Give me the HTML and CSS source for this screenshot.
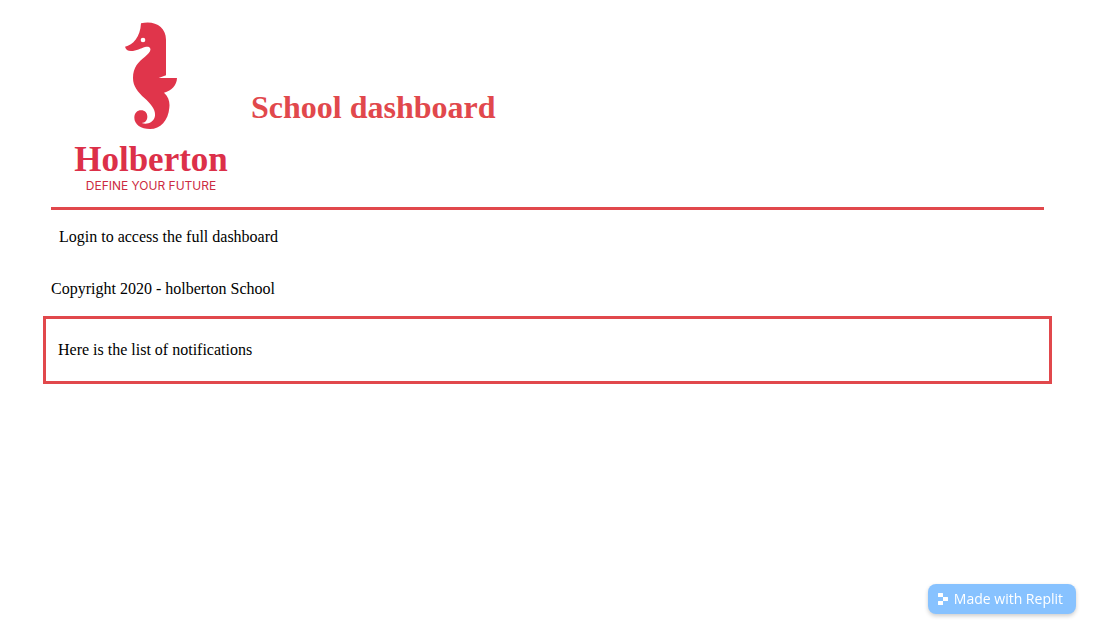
FILE: index.html
```html
<!DOCTYPE html>
<html lang="en">
<head>
  <meta charset="utf-8">
  <meta name="viewport" content="width=device-width, initial-scale=1">
  <title>School dashboard</title>
  <link rel="stylesheet" href="styles.css">
</head>
<body>
  <div class="app">
    <header class="header">
      <div class="logo">
        <svg class="logo-mark" viewBox="0 0 156 324" aria-hidden="true">
          <path fill="#e0354b" d="M48 4 C88-6 123 14 123 53 L123 160 L101 168 L156 168 C155 190 141 206 117 212 C131 225 135 240 133 257 C130 295 106 321 75 321 C48 321 28 307 28 287 C28 273 37 265 48 265 C60 265 67 273 67 284 C67 295 60 302 50 303 C66 309 84 302 89 286 C95 264 77 246 59 229 C38 210 24 192 24 168 C24 136 40 119 60 104 C70 96 78 89 76 80 C74 74 68 73 60 75 C47 79 35 87 18 87 C8 87 2 82 0 74 C24 69 46 46 48 4Z"/>
          <circle cx="54" cy="54" r="7" fill="#fff"/>
        </svg>
        <span class="logo-name">Holberton</span>
        <span class="logo-tag">DEFINE YOUR FUTURE</span>
      </div>
      <h1 class="title">School dashboard</h1>
    </header>
    <main class="body">
      <p class="text">Login to access the full dashboard</p>
    </main>
    <footer class="footer">
      <p class="text">Copyright 2020 - holberton School</p>
    </footer>
  </div>
  <section class="notifications">
    <p class="text">Here is the list of notifications</p>
  </section>
  <a class="badge" href="#">
    <svg class="badge-icon" viewBox="0 0 10 12" aria-hidden="true">
      <path fill="#fff" d="M.5 0H4.5Q5 0 5 .5V4H.5Q0 4 0 3.500V.5Q0 0 .5 0ZM5 4H9.500Q10 4 10 4.500V7.500Q10 8 9.500 8H5ZM.5 8H5V11.500Q5 12 4.500 12H.5Q0 12 0 11.500V8.500Q0 8 .5 8Z"/>
    </svg>
    <span>Made with Replit</span>
  </a>
</body>
</html>
```
FILE: styles.css
```css
* {
  box-sizing: border-box;
}

body {
  margin: 0;
  padding: 7px 43px;
  background: #fff;
  color: #000;
  font: 16px/18px "Liberation Serif", "Times New Roman", serif;
}

.app {
  padding: 0 8px;
}

.header {
  display: flex;
  align-items: center;
  border-bottom: 3px solid #e1484c;
}

.logo {
  display: flex;
  flex-direction: column;
  align-items: center;
  width: 200px;
  height: 200px;
  padding-top: 15px;
  color: #dc3049;
}

.logo-mark {
  width: 52px;
  height: 108px;
}

.logo-name {
  margin-top: 12px;
  font-size: 35px;
  line-height: 36px;
  font-weight: 700;
}

.logo-tag {
  color: #cc2a42;
  font: 400 12px/16px Inter, sans-serif;
}

.title {
  margin: 0;
  color: #e1484c;
  font-size: 32px;
  line-height: 36px;
}

.text {
  margin: 0;
}

.body {
  padding: 18px 8px;
}

.footer {
  padding: 16px 0 18px;
}

.notifications {
  padding: 22px 12px;
  border: 3px solid #e1484c;
}

.badge {
  position: fixed;
  right: 19px;
  bottom: 26px;
  display: flex;
  align-items: center;
  gap: 6px;
  height: 30px;
  padding: 0 13px 0 10px;
  border-radius: 8px;
  background: #87c2ff;
  box-shadow: 0 2px 4px rgba(0, 0, 0, 0.2);
  color: #fff;
  font: 500 14px/20px "Open Sans", sans-serif;
  text-decoration: none;
}

.badge-icon {
  width: 10px;
  height: 12px;
}
```
